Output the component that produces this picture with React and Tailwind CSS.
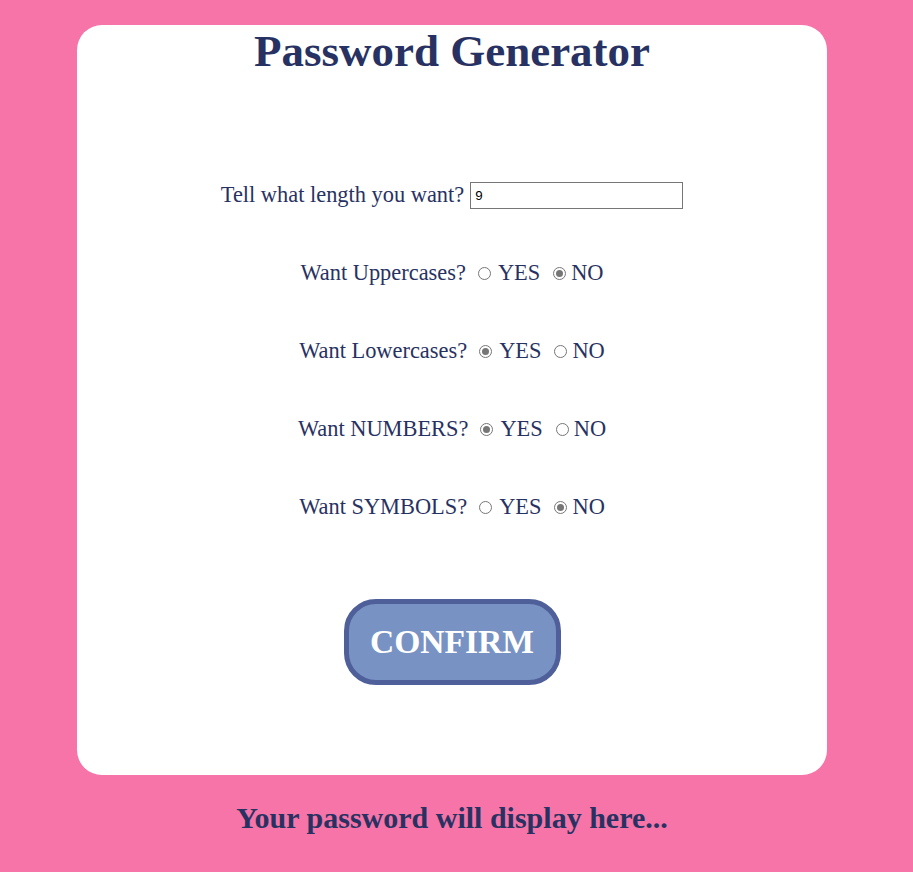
import React from 'react';

const serif = { fontFamily: '"Liberation Serif", "Times New Roman", serif' };

function Radio({ checked }) {
  return (
    <span className="flex h-[13px] w-[13px] items-center justify-center rounded-full border border-[#767676] bg-white">
      {checked && <span className="h-[7px] w-[7px] rounded-full bg-[#767676]" />}
    </span>
  );
}

function Choice({ label, yes }) {
  return (
    <div className="flex h-[28px] items-center justify-center text-[22.4px] text-[#283262]">
      <span>{label}</span>
      <span className="ml-[12px] flex items-center"><Radio checked={yes} /></span>
      <span className="ml-[7px]">YES</span>
      <span className="ml-[13px] flex items-center"><Radio checked={!yes} /></span>
      <span className="ml-[5px]">NO</span>
    </div>
  );
}

export default function App() {
  return (
    <div className="min-h-[872px] w-full bg-[#f674a7] pt-[25px]" style={serif}>
      <div className="w-[904px]">
        <div className="mx-auto flex h-[750px] w-[750px] flex-col items-center rounded-[25px] bg-white">
          <h1 className="text-[45px] font-bold leading-[52px] text-[#283262]">Password Generator</h1>

          <div className="mt-[104px] flex w-full flex-col gap-[50px]">
            <div className="flex h-[28px] items-center justify-center text-[22.4px] text-[#283262]">
              <span>Tell what length you want?</span>
              <input
                type="text"
                defaultValue="9"
                className="ml-[6px] h-[27px] w-[213px] border border-[#767676] px-[4px] text-[13.3px] text-black outline-none"
                style={{ fontFamily: '"Liberation Sans", Arial, sans-serif' }}
              />
            </div>
            <Choice label="Want Uppercases?" yes={false} />
            <Choice label="Want Lowercases?" yes={true} />
            <Choice label="Want NUMBERS?" yes={true} />
            <Choice label="Want SYMBOLS?" yes={false} />
          </div>

          <button className="mt-[78px] h-[86px] w-[217px] rounded-[32px] border-[5px] border-[#4e5f99] bg-[#7893c3] text-[33.6px] font-bold text-white">
            CONFIRM
          </button>
        </div>

        <p className="mt-[27px] text-center text-[30px] font-bold leading-[32px] text-[#283262]">
          Your password will display here...
        </p>
      </div>
    </div>
  );
}
